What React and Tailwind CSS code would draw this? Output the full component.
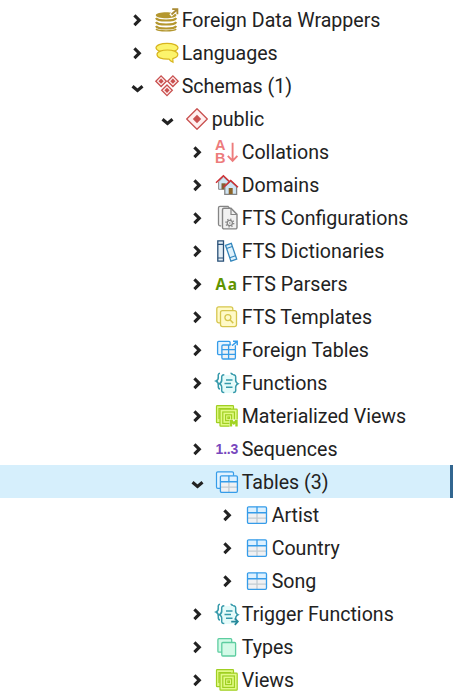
import React from "react";

function Icon({ children }) {
  return (
    <svg className="h-[33px] w-[26px] shrink-0 overflow-visible" viewBox="0 0 26 33" fill="none">
      {children}
    </svg>
  );
}

function Chevron({ open }) {
  return (
    <svg className="h-[33px] w-[30px] shrink-0" viewBox="0 0 30 33" fill="none" stroke="#222" strokeWidth="3.1">
      {open ? <path d="M7.5 17.2 12.5 21.4 17.5 17.2" /> : <path d="M9.4 12.3 14.3 17.2 9.4 22.1" />}
    </svg>
  );
}

function Wrapper() {
  return (
    <Icon>
      <path d="M.8 12.3c0-4 20.6-4 20.6 0s-20.6 4-20.6 0Z" fill="#b4972f" />
      <path d="M1 15c1.5 3.4 18.7 3.4 20.2 0M1 19c1.5 3.4 18.7 3.4 20.2 0M1 23c1.5 3.4 18.7 3.4 20.2 0" stroke="#b4972f" strokeWidth="2.1" />
      <path d="M1 26c2 2.5 18 2.5 20.2 0" stroke="#b4972f" strokeWidth="1.4" />
      <path d="m15.5 12.5 6-5.5" stroke="#fff" strokeWidth="3.5" />
      <path d="m16.5 11.5 5-4.5M17.2 6.2h5.2v5" stroke="#a98b35" strokeWidth="1.8" />
    </Icon>
  );
}

function Language() {
  return (
    <Icon>
      <ellipse cx="12" cy="11.8" rx="11" ry="4.5" fill="#fcf46c" stroke="#d8b51e" strokeWidth="1.2" />
      <path d="M2 18.5c0-6 20.8-6 20.8 0 0 2.2-2 3.3-5 4.1l.2 3.7c-1.8-.8-3.3-1.8-4-3.2C7 23.3 2 22 2 18.5Z" fill="#fcf46c" stroke="#d8b51e" strokeWidth="1.2" />
    </Icon>
  );
}

function Schemas() {
  return (
    <Icon>
      {[[6.1, 12.2], [17.9, 12.2], [12, 21.3]].map(([x, y]) => (
        <g key={x} transform={`translate(${x} ${y})`}>
          <path d="M0-5.3 5.3 0 0 5.3-5.3 0Z" fill="#fdecec" stroke="#c9504f" strokeWidth="1.3" />
          <path d="M0-2.6 2.6 0 0 2.6-2.6 0Z" fill="#c9504f" />
        </g>
      ))}
    </Icon>
  );
}

function Schema() {
  return (
    <Icon>
      <path d="M12 6.8 22.3 17 12 27.2 1.7 17Z" fill="#fff0f0" stroke="#c9504f" strokeWidth="1.3" strokeLinejoin="round" />
      <path d="M12 12.8 16.2 17 12 21.2 7.8 17Z" fill="#c9504f" />
    </Icon>
  );
}

function Collation() {
  return (
    <Icon>
      <g fill="#ed7c7c" className="font-['Liberation_Sans',sans-serif] text-[14.5px] font-bold">
        <text x="0" y="14.9">A</text>
        <text x="0" y="28">B</text>
      </g>
      <path d="M17.6 7.8v17.8M12.8 20.8l4.8 5 4.8-5" stroke="#ed7c7c" strokeWidth="1.9" />
    </Icon>
  );
}

function Domain() {
  return (
    <Icon>
      <path d="M3.6 13.7 8.5 8.8l5.2 5v7.5H3.6Z" fill="#cfe5f5" stroke="#8a8a8a" />
      <path d="M6.5 15.3h4.2v6H6.5z" fill="#806034" />
      <path d="m1 14.8 7.4-7 7.4 7" stroke="#cf3035" strokeWidth="1.5" />
      <path d="M9.8 18.5 15.7 13l5.9 5.5v7.9H9.8Z" fill="#cfe5f5" stroke="#858585" strokeWidth="1.3" />
      <path d="M13.7 20h4v6h-4z" fill="#8b6429" />
      <path d="m8.5 19.2 7.2-6.7 7.3 6.7" stroke="#cf3035" strokeWidth="1.5" />
    </Icon>
  );
}

function FtsConfig() {
  return (
    <Icon>
      <path d="M6.2 24.8H5a1.5 1.5 0 0 1-1.5-1.5V6.8A1.5 1.5 0 0 1 5 5.3h8l1.5 1.8" fill="#f1f1f1" stroke="#858585" strokeWidth="1.3" />
      <path d="M9 7.2h7l6 6.2v13a1.5 1.5 0 0 1-1.5 1.5H9a1.5 1.5 0 0 1-1.5-1.5V8.7A1.5 1.5 0 0 1 9 7.2Z" fill="#f1f1f1" stroke="#858585" strokeWidth="1.4" />
      <path d="M16 7.5v6h6" stroke="#858585" strokeWidth="1.2" />
      <circle cx="14.8" cy="22" r="2.6" stroke="#858585" strokeWidth="1.2" />
      <circle cx="14.8" cy="22" r="3.8" stroke="#858585" strokeWidth="1.5" strokeDasharray="1.2 1.785" />
      <circle cx="14.8" cy="22" r=".8" fill="#858585" />
    </Icon>
  );
}

function Dictionary() {
  return (
    <Icon>
      <path d="M2.8 6.8h5.7v20.3H2.8z" fill="#e2edf5" stroke="#285078" strokeWidth="1.3" />
      <path d="M2.8 10.3h5.7M2.8 24h5.7" stroke="#285078" strokeWidth="1.2" />
      <path d="m10.5 11.3 5.8-2 5.4 15.8-5.8 2Z" fill="#dff1fb" stroke="#3487bd" strokeWidth="1.3" />
      <path d="m11.5 14.5 5.8-2M14.7 23.7l5.8-2" stroke="#3487bd" strokeWidth="1.2" />
    </Icon>
  );
}

function Parser() {
  return (
    <Icon>
      <text x=".6" y="22.6" fill="#5f9400" textLength="21.6" lengthAdjust="spacing" className="font-['Open_Sans',sans-serif] text-[15.5px] font-bold">Aa</text>
    </Icon>
  );
}

function Template() {
  return (
    <Icon>
      <g fill="#fffac8" stroke="#d6c64e" strokeWidth="1.3">
        <rect x="1.8" y="6.8" width="16" height="16" rx="2" />
        <rect x="5.5" y="10.6" width="16" height="16" rx="2" />
        <circle cx="12.9" cy="17.6" r="3" />
        <path d="m15.2 20 3.1 3.1" strokeWidth="1.5" />
      </g>
    </Icon>
  );
}

function Grid({ x, y, w, h }) {
  return (
    <g transform={`translate(${x} ${y})`}>
      <rect width={w} height={h} rx="1.2" fill="#f0f1f3" />
      <path d={`M0 0H${w}V${h * 0.36}H0Z`} fill="#ddf1ff" />
      <path d={`M${w / 2} ${h * 0.36}V${h}M0 ${h * 0.69}H${w}`} stroke="#c2cbd2" strokeWidth="1.3" />
      <path d={`M${w / 2} 0V${h * 0.36}M0 ${h * 0.36}H${w}`} stroke="#359ce9" strokeWidth="1.3" />
      <rect width={w} height={h} rx="1.2" stroke="#359ce9" strokeWidth="1.3" />
    </g>
  );
}

function ForeignTable() {
  return (
    <Icon>
      <rect x="2.6" y="8.4" width="12.5" height="13.2" rx="1" fill="#e5f4ff" stroke="#359ce9" strokeWidth="1.3" />
      <rect x="6.9" y="12" width="13.5" height="14" rx="1.2" fill="#eef2f5" stroke="#359ce9" strokeWidth="1.3" />
      <path d="M13.6 12v14M6.9 16.6h13.5M6.9 21.3h13.5" stroke="#359ce9" strokeWidth="1.3" />
      <path d="m16.3 13.5 5.3-4.6" stroke="#fff" strokeWidth="3" />
      <path d="m17 12.8 4.8-4.2M18 8.2h4.2v4" stroke="#359ce9" strokeWidth="1.5" />
    </Icon>
  );
}

function Braces({ trigger }) {
  return (
    <Icon>
      <path d="M5 7.3C3.4 7.5 3 8.5 3.3 10.5c.3 2.5 0 3.6-2.3 4.5 2.3 1 2.6 2 2.3 4.5-.2 2.2.2 3.3 1.7 3.5M15.5 7.3c1.3 0 2 .7 2.2 2.2" stroke="#369aab" strokeWidth="1.5" />
      <path d="M8 9h12v18H8l-2-3v-4l-1.5-2L6 16v-5Z" fill="#e5fbfa" />
      <path d="M9.3 8.8c-2.2 0-2.9 1-2.6 3.7.3 2.8 0 4.2-2.2 5.2 2.2 1 2.5 2.4 2.2 5.2-.3 2.7.4 3.7 2.6 3.7M18.1 8.8c2.2 0 2.9 1 2.6 3.7-.3 2.8 0 4.2 2.2 5.2-2.2 1-2.5 2.4-2.2 5.2" stroke="#369aab" strokeWidth="1.5" />
      {!trigger && <path d="M20.7 22.9c.3 2.7-.4 3.7-2.6 3.7" stroke="#369aab" strokeWidth="1.5" />}
      <path d="M11 14h6.5M9.5 17.6H16M11 21.2h6.5" stroke="#369aab" strokeWidth="1.5" />
      {trigger && <path d="M16.2 24.6h5.4M19.8 21.4l3 3.2-3 3.2" stroke="#26899b" strokeWidth="1.8" />}
    </Icon>
  );
}

function View({ materialized }) {
  return (
    <Icon>
      <g stroke="#a0cf22" strokeWidth="1.2" fill="#e1fa86">
        <rect x="1.5" y="6.7" width="17" height="17" rx=".7" />
        <path d="M4 20V9.5h12" />
        <rect x="5" y="10.2" width="17.2" height="17" rx=".7" />
        <rect x="7.8" y="13" width="11.6" height="11.4" />
        <rect x="10.6" y="15.8" width="6" height="5.8" />
        <rect x="12.9" y="18" width="1.5" height="1.5" />
      </g>
      {materialized && (
        <>
          <path d="M14.5 20.5H24V29h-9.5z" fill="#fff" />
          <path d="M14.7 20.8h2.8l1.4 2 1.5-2h2.3v6.6h-2.4v-3l-1.4 1.5-1.7-1.5v3h-2.5Z" fill="#a2d421" />
        </>
      )}
    </Icon>
  );
}

function Sequence() {
  return (
    <Icon>
      <text x=".6" y="22.2" fill="#7848bd" textLength="22.6" lengthAdjust="spacing" className="font-['Liberation_Sans',sans-serif] text-[14px] font-bold">1..3</text>
    </Icon>
  );
}

function Tables() {
  return (
    <Icon>
      <rect x="1.5" y="6.8" width="17" height="16.5" rx="1.3" fill="#e2f3ff" stroke="#359ce9" strokeWidth="1.2" />
      <Grid x={5.4} y={10.8} w={17} h={16.5} />
    </Icon>
  );
}

function Table() {
  return (
    <Icon>
      <Grid x={2.5} y={8.8} w={19} h={16.5} />
    </Icon>
  );
}

function Types() {
  return (
    <Icon>
      <g fill="#d3fae7" stroke="#5dcda0" strokeWidth="1.3">
        <rect x="2.9" y="8.7" width="13.8" height="13.5" rx="1" />
        <rect x="6.8" y="12.5" width="13.8" height="13.5" rx="1" />
      </g>
    </Icon>
  );
}

const indents = ["pl-[125px]", "pl-[155px]", "pl-[185px]", "pl-[215px]"];

const rows = [
  { label: "Foreign Data Wrappers", level: 0, icon: <Wrapper /> },
  { label: "Languages", level: 0, icon: <Language /> },
  { label: "Schemas (1)", level: 0, open: true, icon: <Schemas /> },
  { label: "public", level: 1, open: true, icon: <Schema /> },
  { label: "Collations", level: 2, icon: <Collation /> },
  { label: "Domains", level: 2, icon: <Domain /> },
  { label: "FTS Configurations", level: 2, icon: <FtsConfig /> },
  { label: "FTS Dictionaries", level: 2, icon: <Dictionary /> },
  { label: "FTS Parsers", level: 2, icon: <Parser /> },
  { label: "FTS Templates", level: 2, icon: <Template /> },
  { label: "Foreign Tables", level: 2, icon: <ForeignTable /> },
  { label: "Functions", level: 2, icon: <Braces /> },
  { label: "Materialized Views", level: 2, icon: <View materialized /> },
  { label: "Sequences", level: 2, icon: <Sequence /> },
  { label: "Tables (3)", level: 2, open: true, selected: true, icon: <Tables /> },
  { label: "Artist", level: 3, icon: <Table /> },
  { label: "Country", level: 3, icon: <Table /> },
  { label: "Song", level: 3, icon: <Table /> },
  { label: "Trigger Functions", level: 2, icon: <Braces trigger /> },
  { label: "Types", level: 2, icon: <Types /> },
  { label: "Views", level: 2, icon: <View /> },
];

export default function App() {
  return (
    <div role="tree" className="h-[694px] w-[453px] overflow-hidden bg-white pt-[3px] font-[Roboto,sans-serif] text-[19.6px] text-[#222]">
      {rows.map((row) => (
        <div
          key={row.label}
          role="treeitem"
          aria-selected={!!row.selected}
          className={`flex h-[33px] items-center border-r-[3px] ${indents[row.level]} ${row.selected ? "border-[#326690] bg-[#d6effc]" : "border-transparent"}`}
        >
          <Chevron open={row.open} />
          {row.icon}
          <span className="ml-[0.7px] whitespace-nowrap pt-[2px] leading-[33px]">{row.label}</span>
        </div>
      ))}
    </div>
  );
}
